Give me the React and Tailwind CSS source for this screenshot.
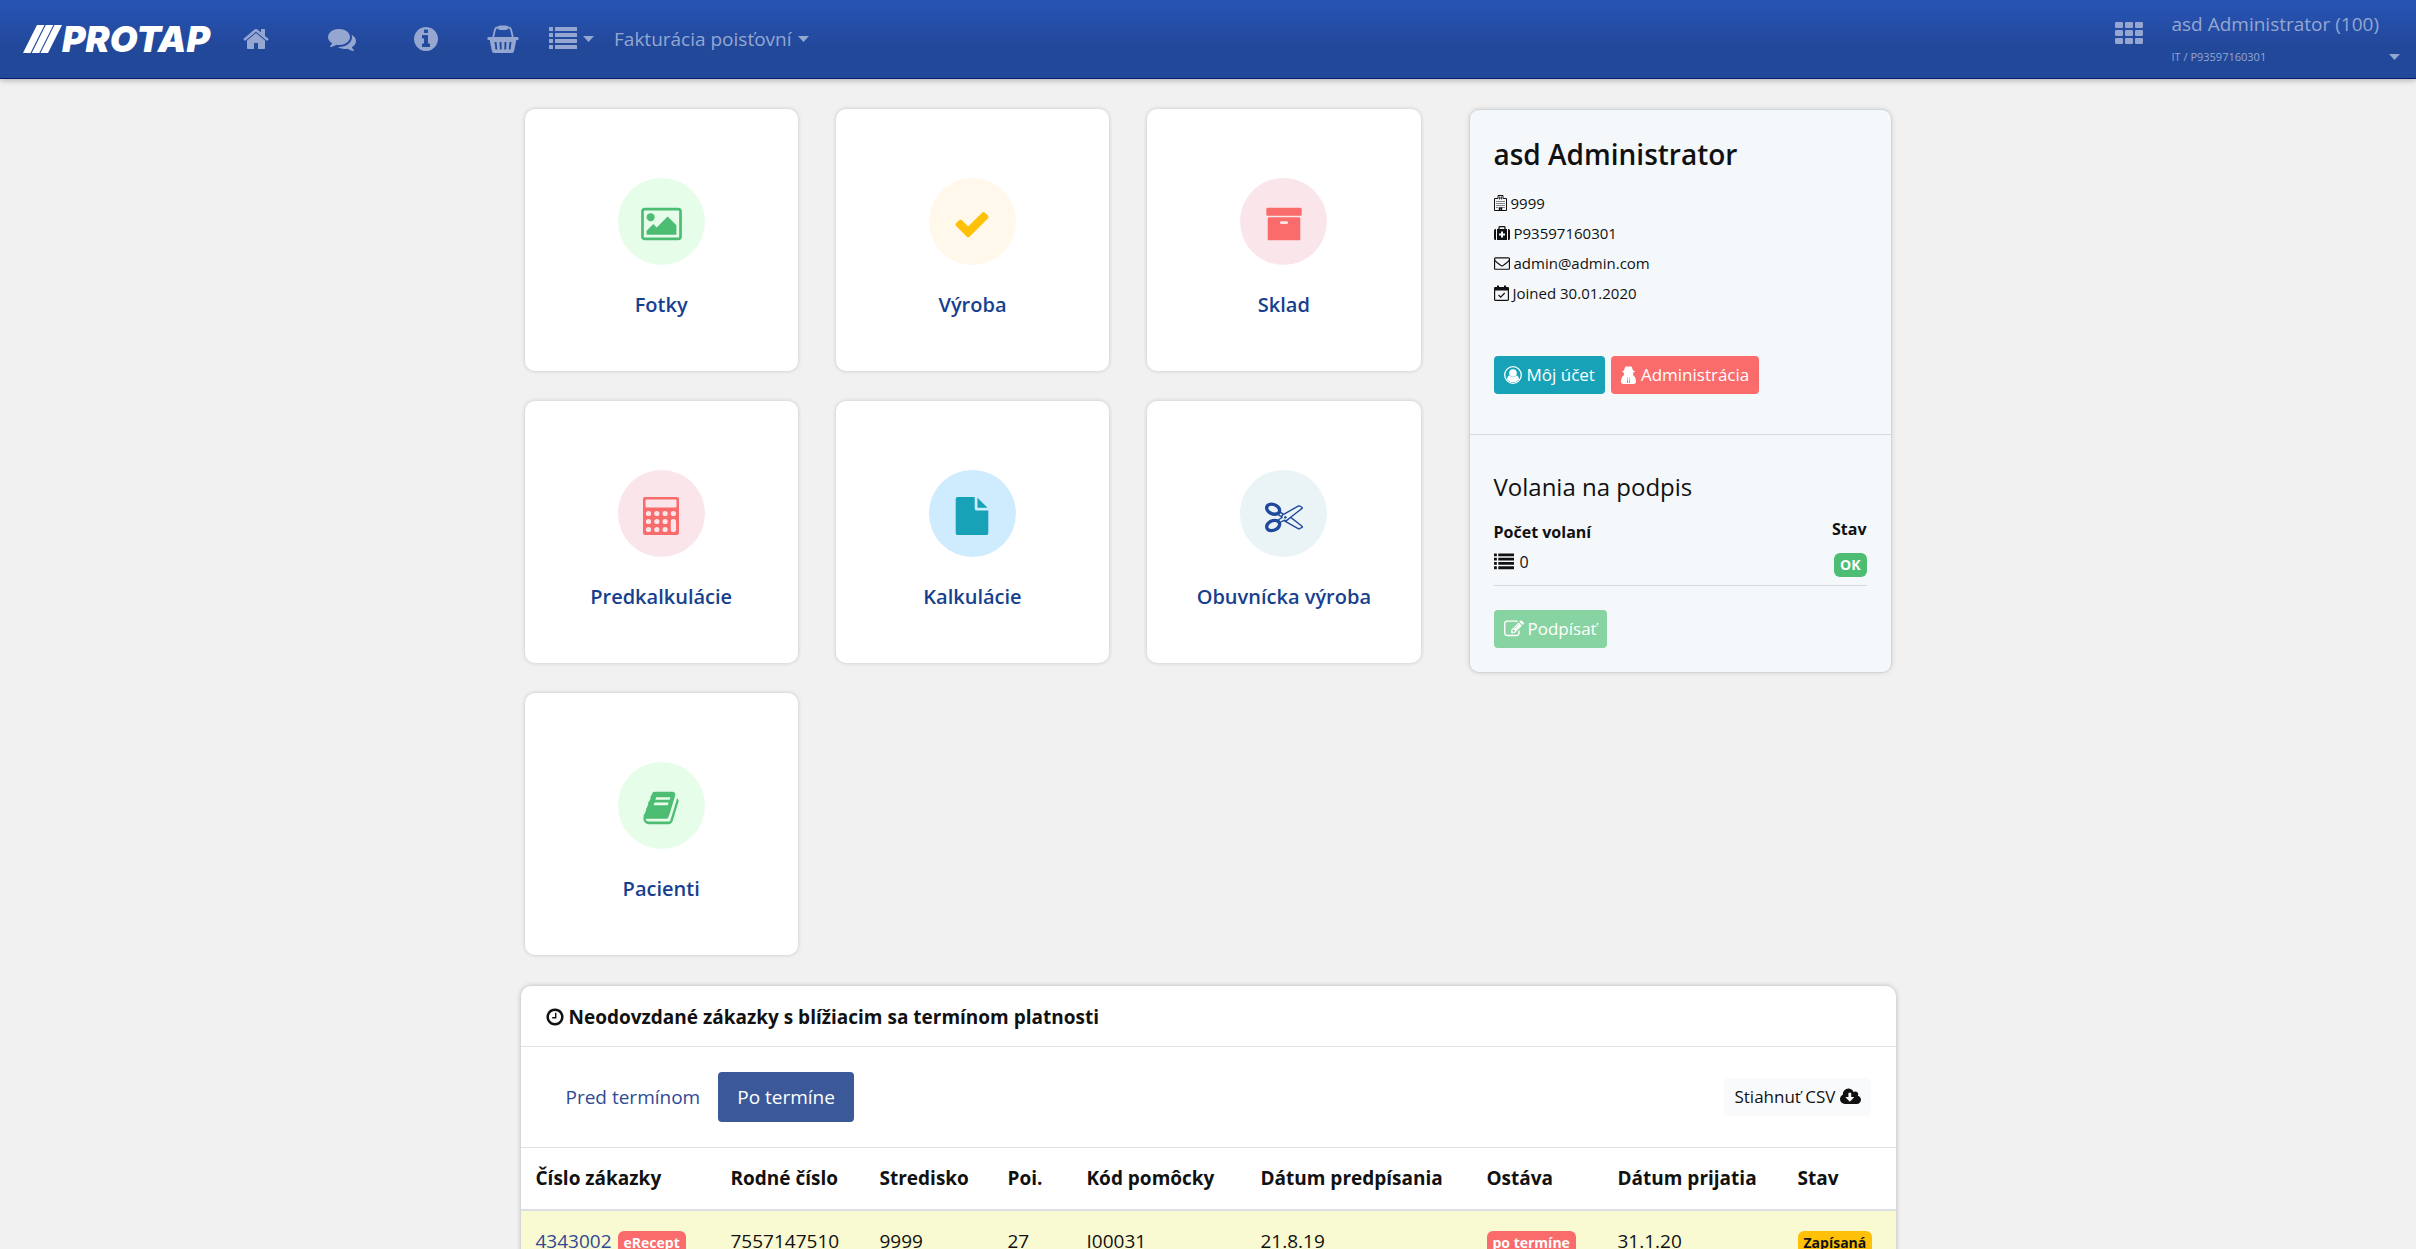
// Font Awesome 4 glyphs, drawn on a 1792 unit grid
const ICONS = {
  home: {
    box: "0 0 1792 1792",
    d: "M1472 992v480q0 26-19 45t-45 19h-384v-384h-256v384h-384q-26 0-45-19t-19-45v-480q0-1 .5-3t.5-3l575-474 575 474q1 2 1 6zm223-69l-62 74q-8 9-21 11h-3q-13 0-21-7l-692-577-692 577q-12 8-24 7-13-2-21-11l-62-74q-8-10-7-23.5t11-21.5l719-599q32-26 76-26t76 26l244 204v-195q0-14 9-23t23-9h192q14 0 23 9t9 23v408l219 182q10 8 11 21.5t-7 23.5z",
  },
  comments: {
    box: "0 0 1792 1792",
    d: "M1408 768q0 139-94 257t-256.5 186.5-353.5 68.5q-86 0-176-16-124 88-278 128-36 9-86 16h-3q-11 0-20.5-8t-11.5-21q-1-3-1-6.5t.5-6.5 2-6l2.5-5 3.5-5.5 4-5 4.5-5 4-4.5q5-6 23-25t26-29.5 22.5-29 25-38.5 20.5-44q-124-72-195-177t-71-224q0-139 94-257t256.5-186.5 353.5-68.5 353.5 68.5 256.5 186.5 94 257zm384 256q0 120-71 224.5t-195 176.5q10 24 20.5 44t25 38.5 22.5 29 26 29.5 23 25q1 1 4 4.5t4.5 5 4 5 3.5 5.5l2.5 5 2 6 .5 6.5-1 6.5q-3 14-13 22t-22 7q-50-7-86-16-154-40-278-128-90 16-176 16-271 0-472-132 58 4 88 4 161 0 309-45t264-129q125-92 192-212t67-254q0-77-23-152 129 71 204 178t75 230z",
  },
  info: {
    box: "0 0 1792 1792",
    d: "M1152 1376v-160q0-14-9-23t-23-9h-96v-512q0-14-9-23t-23-9h-320q-14 0-23 9t-9 23v160q0 14 9 23t23 9h96v320h-96q-14 0-23 9t-9 23v160q0 14 9 23t23 9h448q14 0 23-9t9-23zm-128-896v-160q0-14-9-23t-23-9h-192q-14 0-23 9t-9 23v160q0 14 9 23t23 9h192q14 0 23-9t9-23zm640 416q0 209-103 385.5t-279.5 279.5-385.5 103-385.5-103-279.5-279.5-103-385.5 103-385.5 279.5-279.5 385.5-103 385.5 103 279.5 279.5 103 385.5z",
  },
  list: {
    box: "0 0 1792 1792",
    d: "M32 128h192q32 0 32 32v192q0 32-32 32h-192q-32 0-32-32v-192q0-32 32-32zM416 128h1344q32 0 32 32v192q0 32-32 32h-1344q-32 0-32-32v-192q0-32 32-32zM32 512h192q32 0 32 32v192q0 32-32 32h-192q-32 0-32-32v-192q0-32 32-32zM416 512h1344q32 0 32 32v192q0 32-32 32h-1344q-32 0-32-32v-192q0-32 32-32zM32 896h192q32 0 32 32v192q0 32-32 32h-192q-32 0-32-32v-192q0-32 32-32zM416 896h1344q32 0 32 32v192q0 32-32 32h-1344q-32 0-32-32v-192q0-32 32-32zM32 1280h192q32 0 32 32v192q0 32-32 32h-192q-32 0-32-32v-192q0-32 32-32zM416 1280h1344q32 0 32 32v192q0 32-32 32h-1344q-32 0-32-32v-192q0-32 32-32z",
  },
  picture: {
    box: "-64 0 1920 1792",
    d: "M576 576q0 80-56 136t-136 56-136-56-56-136 56-136 136-56 136 56 56 136zm1024 384v448h-1408v-192l320-320 160 160 512-512zm96-704h-1600q-13 0-22.5 9.5t-9.5 22.5v1216q0 13 9.5 22.5t22.5 9.5h1600q13 0 22.5-9.5t9.5-22.5v-1216q0-13-9.5-22.5t-22.5-9.5zm160 32v1216q0 66-47 113t-113 47h-1600q-66 0-113-47t-47-113v-1216q0-66 47-113t113-47h1600q66 0 113 47t47 113z",
  },
  check: {
    box: "0 0 1792 1792",
    d: "M1671 566q0 40-28 68l-724 724-136 136q-28 28-68 28t-68-28l-136-136-362-362q-28-28-28-68t28-68l136-136q28-28 68-28t68 28l294 295 656-657q28-28 68-28t68 28l136 136q28 28 28 68z",
  },
  archive: {
    box: "0 0 1792 1792",
    d: "M1088 832q0-26-19-45t-45-19h-256q-26 0-45 19t-19 45 19 45 45 19h256q26 0 45-19t19-45zm576-192v960q0 26-19 45t-45 19h-1408q-26 0-45-19t-19-45v-960q0-26 19-45t45-19h1408q26 0 45 19t19 45zm64-448v256q0 26-19 45t-45 19h-1536q-26 0-45-19t-19-45v-256q0-26 19-45t45-19h1536q26 0 45 19t19 45z",
  },
  file: {
    box: "0 0 1792 1792",
    d: "M1152 512v-472q22 14 36 28l408 408q14 14 28 36h-472zm-128 32q0 40 28 68t68 28h544v1056q0 40-28 68t-68 28h-1344q-40 0-68-28t-28-68v-1600q0-40 28-68t68-28h800v544z",
  },
  scissors: {
    box: "0 0 1792 1792",
    d: "M960 896q26 0 45 19t19 45-19 45-45 19-45-19-19-45 19-45 45-19zm300 64l507 398q28 20 25 56-5 35-35 51l-128 64q-13 7-29 7-17 0-31-8l-690-387-110 66q-8 4-12 5 14 49 10 97-7 77-56 147.5t-132 123.5q-132 84-277 84-136 0-222-78-90-84-79-207 7-76 56-147t131-124q132-84 278-84 83 0 151 31 9-13 22-22l122-73-122-73q-13-9-22-22-68 31-151 31-146 0-278-84-82-53-131-124t-56-147q-5-59 15.5-113t63.5-93q85-79 222-79 145 0 277 84 83 52 132 123t56 148q4 48-10 97 4 1 12 5l110 66 690-387q14-8 31-8 16 0 29 7l128 64q30 16 35 51 3 36-25 56zm-681-260q46-42 21-108t-106-117q-92-59-192-59-74 0-113 36-46 42-21 108t106 117q92 59 192 59 74 0 113-36zm-85 745q81-51 106-117t-21-108q-39-36-113-36-100 0-192 59-81 51-106 117t21 108q39 36 113 36 100 0 192-59zm178-613l96 58v-11q0-36 33-56l14-8-79-44-26 26q-3 3-10 11t-12 12q-2 2-4 3.5t-3 2.5zm224 224l96 32 736-576-128-64-768 431v113l-160 96 9 8q2 2 7 6 4 4 11 12t11 12l26 26zm704 416l128-64-520-408-177 138q-2 3-13 7z",
  },
  book: {
    box: "0 0 1792 1792",
    d: "M1703 478q40 57 18 129l-275 906q-19 64-76.5 107.5t-122.5 43.5h-923q-77 0-148.5-53.5t-99.5-131.5q-24-67-2-127 0-4 3-27t4-37q1-8-3-21.5t-3-19.5q2-11 8-21t16.5-23.5 16.5-23.5q23-38 45-91.5t30-91.5q3-10 .5-30t-.5-28q3-11 17-28t17-23q21-36 42-92t25-90q1-9-2.5-32t.5-28q4-13 22-30.5t22-22.5q19-26 42.5-84.5t27.5-96.5q1-8-3-25.5t-2-26.5q2-8 9-18t18-23 17-21q8-12 16.5-30.5t15-35 16-36 19.5-32 26.5-23.5 36-11.5 47.5 5.5l-1 3q38-9 51-9h761q74 0 114 56t18 130l-274 906q-36 119-71.5 153.5t-128.5 34.5h-869q-27 0-38 15-11 16-1 43 24 70 144 70h923q29 0 56-15.5t35-41.5l300-987q7-22 5-57 38 15 59 43zm-1064 2q-4 13 2 22.5t20 9.5h608q13 0 25.5-9.5t16.5-22.5l21-64q4-13-2-22.5t-20-9.5h-608q-13 0-25.5 9.5t-16.5 22.5zm-83 256q-4 13 2 22.5t20 9.5h608q13 0 25.5-9.5t16.5-22.5l21-64q4-13-2-22.5t-20-9.5h-608q-13 0-25.5 9.5t-16.5 22.5z",
  },
  clock: {
    box: "0 0 1792 1792",
    d: "M1024 544v448q0 14-9 23t-23 9h-320q-14 0-23-9t-9-23v-64q0-14 9-23t23-9h224v-352q0-14 9-23t23-9h64q14 0 23 9t9 23zm416 352q0-148-73-273t-198-198-273-73-273 73-198 198-73 273 73 273 198 198 273 73 273-73 198-198 73-273zm224 0q0 209-103 385.5t-279.5 279.5-385.5 103-385.5-103-279.5-279.5-103-385.5 103-385.5 279.5-279.5 385.5-103 385.5 103 279.5 279.5 103 385.5z",
  },
  cloud: {
    box: "-64 0 1920 1792",
    d: "M1216 928q0-14-9-23t-23-9h-224v-352q0-13-9.5-22.5t-22.5-9.5h-192q-13 0-22.5 9.5t-9.5 22.5v352h-224q-13 0-22.5 9.5t-9.5 22.5q0 14 9 23l352 352q9 9 23 9t23-9l351-351q10-12 10-24zm640 224q0 159-112.5 271.5t-271.5 112.5h-1088q-185 0-316.5-131.5t-131.5-316.5q0-130 70-240t188-165q-2-30-2-43 0-212 150-362t362-150q156 0 285.5 87t188.5 231q71-62 166-62 106 0 181 75t75 181q0 76-41 138 130 31 213.5 135.5t83.5 238.5z",
  },
  envelope: {
    box: "0 0 1792 1792",
    d: "M1664 1504v-768q-32 36-69 66-268 206-426 338-51 43-83 67t-86.5 48.5-102.5 24.5h-2q-48 0-102.5-24.5t-86.5-48.5-83-67q-158-132-426-338-37-30-69-66v768q0 13 9.5 22.5t22.5 9.5h1472q13 0 22.5-9.5t9.5-22.5zm0-1051v-24.5l-.5-13-3-12.5-5.5-9-9-7.5-14-2.5h-1472q-13 0-22.5 9.5t-9.5 22.5q0 168 147 284 193 152 401 317 6 5 35 29.5t46 37.5 44.5 31.5 50.5 27.5 43 9h2q20 0 43-9t50.5-27.5 44.5-31.5 46-37.5 35-29.5q208-165 401-317 54-43 100.5-115.5t46.5-131.5zm128-37v1088q0 66-47 113t-113 47h-1472q-66 0-113-47t-47-113v-1088q0-66 47-113t113-47h1472q66 0 113 47t47 113z",
  },
  edit: {
    box: "0 0 1792 1792",
    d: "M888 1184l116-116-152-152-116 116v56h96v96h56zm440-720q-16-16-33 1l-350 350q-17 17-1 33t33-1l350-350q17-17 1-33zm80 594v190q0 119-84.5 203.5t-203.5 84.5h-832q-119 0-203.5-84.5t-84.5-203.5v-832q0-119 84.5-203.5t203.5-84.5h832q63 0 117 25 15 7 18 23 3 17-9 29l-49 49q-14 14-32 8-23-6-45-6h-832q-66 0-113 47t-47 113v832q0 66 47 113t113 47h832q66 0 113-47t47-113v-126q0-13 9-22l64-64q15-15 35-7t20 29zm-96-738l288 288-672 672h-288v-288zm444 132l-92 92-288-288 92-92q28-28 68-28t68 28l152 152q28 28 28 68t-28 68z",
  },
};

function Icon({ name, className }) {
  const icon = ICONS[name];
  return (
    <svg viewBox={icon.box} className={className} fill="currentColor" aria-hidden="true">
      <path d={icon.d} />
    </svg>
  );
}

function Basket({ className }) {
  return (
    <svg viewBox="0 0 32 28" className={className} fill="none" aria-hidden="true">
      <path d="M6 13 8 4.5Q8.500 2.500 10.500 2.500H21.500Q23.500 2.500 24 4.500L26 13" stroke="currentColor" strokeWidth="1.800" />
      <rect x="11" y="0.500" width="10" height="4.500" rx="2" fill="currentColor" />
      <path
        fill="currentColor"
        fillRule="evenodd"
        d="M1.500 12h29q1.200 0 1.200 1.500t-1.200 1.500h-1.200l-2.200 11q-.4 2-2.200 2H7.100q-1.800 0-2.200-2L2.700 15H1.500Q.3 15 .3 13.500T1.500 12zM7.500 17l1 7.500h1.800l-.8-7.500zM12.500 17l.4 7.500h1.800l-.2-7.500zM17.500 17l-.2 7.500h1.800l.4-7.500zM22.500 17l-.8 7.500h1.800l1-7.500z"
      />
    </svg>
  );
}

function GridIcon({ className }) {
  return (
    <svg viewBox="0 0 28 22" className={className} fill="currentColor" aria-hidden="true">
      {[0, 8, 16].map((y) =>
        [0, 10, 20].map((x) => <rect key={`${x}-${y}`} x={x} y={y} width="8" height="6" rx="1.2" />)
      )}
    </svg>
  );
}

function Calculator({ className }) {
  return (
    <svg viewBox="0 0 36 38" className={className} fill="currentColor" aria-hidden="true">
      <path
        fillRule="evenodd"
        d="M2 0h32q2 0 2 2v34q0 2-2 2H2q-2 0-2-2V2Q0 0 2 0zM3.500 2.500q-1 0-1 1v6q0 1 1 1h29q1 0 1-1v-6q0-1-1-1z"
      />
      <g className="text-[#fae6ea]">
        {[5.5, 13.8, 22.1].map((x) =>
          [16.5, 24.5, 32.5].map((y) => <circle key={`${x}-${y}`} cx={x} cy={y} r="2.6" />)
        )}
        <circle cx="30.4" cy="16.5" r="2.6" />
        <rect x="27.8" y="21.9" width="5.2" height="13.2" rx="2.6" />
      </g>
    </svg>
  );
}

function Hospital({ className }) {
  return (
    <svg viewBox="0 0 13 16" className={className} fill="none" stroke="currentColor" aria-hidden="true">
      <path d="M.5 15.500V3.500H4V.5H9V3.500H12.500V15.500Z" />
      <path d="M5.500 1.500V4.500M7.500 1.500V4.500M5.500 3H7.500" strokeWidth=".8" />
      <path d="M2.500 6.500H11M2.500 8.500H11M2.500 10.500H11M2.500 12.500H4.500M8.500 12.500H11" strokeDasharray="1 1" />
      <path d="M5.500 15.500V13H7.500V15.500" strokeWidth="1.500" />
    </svg>
  );
}

function Medkit({ className }) {
  return (
    <svg viewBox="0 0 16 14" className={className} fill="currentColor" aria-hidden="true">
      <path d="M5 3V1.500Q5 .7 5.800.7H10.200Q11 .7 11 1.500V3" fill="none" stroke="currentColor" strokeWidth="1.300" />
      <path d="M2 3v11h-.5Q0 14 0 12.500v-8Q0 3 1.500 3zM14 3v11h.5q1.500 0 1.500-1.500v-8Q16 3 14.500 3z" />
      <path fillRule="evenodd" d="M3 3h10v11H3zM7 5.500v2H5v2h2v2h2v-2h2v-2H9v-2z" />
    </svg>
  );
}

function CalendarCheck({ className }) {
  return (
    <svg viewBox="0 0 15 16" className={className} fill="none" stroke="currentColor" aria-hidden="true">
      <rect x=".6" y="2.600" width="13.800" height="12.800" rx=".8" strokeWidth="1.200" />
      <path d="M1 2.500H14V5H1Z" fill="currentColor" />
      <path d="M4 .5V4M11 .5V4" strokeWidth="2" />
      <path d="M4.500 10l2.200 2.200L10.700 8" strokeWidth="1.200" />
    </svg>
  );
}

function UserCircle({ className }) {
  return (
    <svg viewBox="0 0 18 18" className={className} fill="currentColor" aria-hidden="true">
      <circle cx="9" cy="9" r="8.300" fill="none" stroke="currentColor" strokeWidth="1.300" />
      <circle cx="9" cy="7" r="3.800" />
      <path d="M3 13.500Q3.300 9.800 5.500 9.500Q9 12.500 12.500 9.500Q14.700 9.800 15 13.500Q12.800 16.200 9 16.200T3 13.500z" />
    </svg>
  );
}

function UserSecret({ className }) {
  return (
    <svg viewBox="0 0 15 18" className={className} fill="currentColor" aria-hidden="true">
      <path
        fillRule="evenodd"
        d="M3 4.500 4 1.500Q4.800-.4 7.500.8Q10.200-.4 11 1.500L12 4.500Q14 5 14 5.600Q13.500 6.300 12.200 6.600Q12.400 8 11.800 9Q14.800 10.500 15 15.500Q15 18 12.500 18H2.500Q0 18 0 15.500Q.2 10.500 3.200 9Q2.600 8 2.800 6.600Q1.500 6.300 1 5.600Q1 5 3 4.500zM5.800 11l.8 1.500-.8 4.500h1.200v-5zM9.200 11l-.8 1.500.8 4.500H8v-5z"
      />
    </svg>
  );
}

function Caret() {
  return (
    <svg viewBox="0 0 11 6" className="h-1.5 w-[11px] shrink-0" fill="currentColor" aria-hidden="true">
      <path d="M0 0H11L5.500 6Z" />
    </svg>
  );
}

const modules = [
  { label: "Fotky", circle: "bg-[#e6fde9] text-[#4dbd74]", icon: <Icon name="picture" className="h-[38px] w-[41px]" /> },
  { label: "Výroba", circle: "bg-[#fff8eb] text-[#ffc107]", icon: <Icon name="check" className="size-[38px]" /> },
  { label: "Sklad", circle: "bg-[#fae6ea] text-[#f96c6b]", icon: <Icon name="archive" className="size-[38px]" /> },
  { label: "Predkalkulácie", circle: "bg-[#fae6ea] text-[#f96c6b]", icon: <Calculator className="h-[38px] w-9" /> },
  { label: "Kalkulácie", circle: "bg-[#cfecff] text-[#17a2b8]", icon: <Icon name="file" className="size-[38px]" /> },
  { label: "Obuvnícka výroba", circle: "bg-[#eaf4f7] text-[#20489c]", icon: <Icon name="scissors" className="size-[38px]" /> },
  { label: "Pacienti", circle: "bg-[#e6fde9] text-[#4dbd74]", icon: <Icon name="book" className="size-[38px]" /> },
];

const columns = [
  { label: "Číslo zákazky", width: "w-[195px]" },
  { label: "Rodné číslo", width: "w-[149px]" },
  { label: "Stredisko", width: "w-[128px]" },
  { label: "Poi.", width: "w-[79px]" },
  { label: "Kód pomôcky", width: "w-[174px]" },
  { label: "Dátum predpísania", width: "w-[226px]" },
  { label: "Ostáva", width: "w-[131px]" },
  { label: "Dátum prijatia", width: "w-[180px]" },
  { label: "Stav", width: "w-[113px]" },
];

const orders = [
  {
    id: "4343002",
    tag: "eRecept",
    birthNo: "7557147510",
    center: "9999",
    insurer: "27",
    code: "I00031",
    prescribed: "21.8.19",
    remaining: "po termíne",
    received: "31.1.20",
    status: "Zapísaná",
  },
];

function Badge({ className, children }) {
  return (
    <span className={`inline-block rounded-md px-1.5 text-sm leading-6 font-bold ${className}`}>
      {children}
    </span>
  );
}

function Navbar() {
  return (
    <header className="flex h-[79px] items-center border-b border-[#0a1a6e] bg-linear-to-b from-[#2754b5] to-[#22489a] to-60% pr-4 pl-[23px] text-[#95a7d1] shadow-[0_1px_6px_rgba(0,0,0,0.3)]">
      <a href="#" className="flex items-center text-white">
        <svg viewBox="0 0 39 28" className="h-7 w-[39px]" fill="currentColor" aria-hidden="true">
          <path d="M14 0H21.500L7.500 28H0ZM22.800 0H30.300L16.300 28H8.800ZM31.500 0H39L25 28H17.500Z" />
        </svg>
        <span className="font-[Inter,sans-serif] text-[36px] leading-8 font-black italic">PROTAP</span>
      </a>
      <nav className="flex items-center">
        <a href="#" aria-label="Domov" className="ml-8"><Icon name="home" className="size-7" /></a>
        <a href="#" aria-label="Správy" className="ml-[58px]"><Icon name="comments" className="size-7" /></a>
        <a href="#" aria-label="Informácie" className="ml-14"><Icon name="info" className="size-7" /></a>
        <a href="#" aria-label="Košík" className="ml-[47px]"><Basket className="h-7 w-8" /></a>
        <button aria-label="Zoznamy" className="ml-[30px] flex items-center gap-1.5">
          <Icon name="list" className="size-7" />
          <Caret />
        </button>
        <button className="ml-5 flex items-center gap-1.5 text-[19px]">
          Fakturácia poisťovní
          <Caret />
        </button>
      </nav>
      <div className="ml-auto flex items-center">
        <button aria-label="Aplikácie" className="mr-[29px] mb-3">
          <GridIcon className="h-[22px] w-7" />
        </button>
        <button className="flex items-end text-left">
          <span className="flex flex-col">
            <span className="text-[19px] leading-9">asd Administrator (100)</span>
            <span className="text-[11px] leading-[30px]">IT / P93597160301</span>
          </span>
          <span className="mb-3 ml-2.5"><Caret /></span>
        </button>
      </div>
    </header>
  );
}

function ModuleCard({ module }) {
  return (
    <a
      href="#"
      className="flex h-[262px] flex-col items-center rounded-[10px] bg-white pt-[69px] shadow-[0_0_4px_rgba(0,0,0,0.18)]"
    >
      <span className={`flex size-[87px] items-center justify-center rounded-full pt-1 ${module.circle}`}>
        {module.icon}
      </span>
      <span className="mt-6 text-xl leading-8 font-semibold text-[#173f8f]">{module.label}</span>
    </a>
  );
}

function ProfilePanel() {
  return (
    <aside className="w-[423px] shrink-0 self-start rounded-[10px] border border-[#d2d5d8] bg-[#f4f8fb] text-[#111] shadow-[0_0_5px_rgba(0,0,0,0.12)]">
      <section className="border-b border-[#d6dadd] px-6 pt-6 pb-10">
        <h2 className="text-[28px] leading-10 font-semibold">asd Administrator</h2>
        <ul className="mt-3.5 text-[15px] leading-[30px]">
          <li className="flex items-center gap-1"><Hospital className="h-4 w-[13px]" />9999</li>
          <li className="flex items-center gap-1"><Medkit className="h-3.5 w-4" />P93597160301</li>
          <li className="flex items-center gap-1"><Icon name="envelope" className="size-4" />admin@admin.com</li>
          <li className="flex items-center gap-1"><CalendarCheck className="h-4 w-[15px]" />Joined 30.01.2020</li>
        </ul>
        <div className="mt-12 flex gap-1.5">
          <button className="flex h-[38px] items-center gap-[5px] rounded bg-[#17a2b8] px-2.5 text-[17px] text-white">
            <UserCircle className="size-[18px]" />
            Môj účet
          </button>
          <button className="flex h-[38px] items-center gap-[5px] rounded bg-[#f96c6b] px-2.5 text-[17px] text-white">
            <UserSecret className="h-[18px] w-[15px]" />
            Administrácia
          </button>
        </div>
      </section>
      <section className="px-6 pt-9 pb-6">
        <h3 className="text-2xl leading-8">Volania na podpis</h3>
        <div className="mt-2.5 flex items-start justify-between border-b border-[#d6dadd] pb-2">
          <div>
            <div className="mt-1 text-base leading-[30px] font-bold">Počet volaní</div>
            <div className="flex items-center gap-1.5 text-base leading-[30px]">
              <Icon name="list" className="size-5" />0
            </div>
          </div>
          <div className="flex flex-col items-end gap-2">
            <span className="text-base leading-8 font-bold">Stav</span>
            <Badge className="bg-[#4dbd74] text-white">OK</Badge>
          </div>
        </div>
        <button
          disabled
          className="mt-6 flex h-[38px] items-center gap-1 rounded bg-[#88d3a2] px-2.5 text-[17px] text-white"
        >
          <Icon name="edit" className="size-5" />
          Podpísať
        </button>
      </section>
    </aside>
  );
}

function OrdersCard() {
  return (
    <section className="mt-[31px] overflow-hidden rounded-t-[10px] bg-white text-[#111] shadow-[0_0_5px_rgba(0,0,0,0.25)]">
      <h2 className="flex h-[61px] items-center gap-1 border-b border-[#dfe1e3] px-6 pt-0.5 text-[19px] font-bold">
        <Icon name="clock" className="size-5" />
        Neodovzdané zákazky s blížiacim sa termínom platnosti
      </h2>
      <div className="flex h-[101px] items-center justify-between border-b border-[#dfe1e3] px-[25px]">
        <div className="flex text-[19px]">
          <button className="h-[50px] rounded pr-[18px] pl-5 text-[#2f4a94]">Pred termínom</button>
          <button className="h-[50px] rounded bg-[#3b5998] px-[19px] text-white">Po termíne</button>
        </div>
        <button className="flex h-[38px] items-center gap-1 rounded bg-[#f9fafb] px-2.5 text-[17px]">
          Stiahnuť CSV
          <Icon name="cloud" className="h-5 w-[21px]" />
        </button>
      </div>
      <table className="w-full table-fixed border-collapse text-left text-[19px]">
        <thead>
          <tr className="h-[62px] border-b-2 border-[#dce0e6]">
            {columns.map((col) => (
              <th key={col.label} className={`px-[15px] font-bold whitespace-nowrap ${col.width}`}>
                {col.label}
              </th>
            ))}
          </tr>
        </thead>
        <tbody>
          {orders.map((order) => (
            <tr key={order.id} className="h-[62px] bg-[#f9f9d2] whitespace-nowrap">
              <td className="px-[15px]">
                <a href="#" className="mr-1.5 text-[#2f4a94]">{order.id}</a>
                <Badge className="bg-[#f96c6b] text-white">{order.tag}</Badge>
              </td>
              <td className="px-[15px]">{order.birthNo}</td>
              <td className="px-[15px]">{order.center}</td>
              <td className="px-[15px]">{order.insurer}</td>
              <td className="px-[15px]">{order.code}</td>
              <td className="px-[15px]">{order.prescribed}</td>
              <td className="px-[15px]"><Badge className="bg-[#f96c6b] text-white">{order.remaining}</Badge></td>
              <td className="px-[15px]">{order.received}</td>
              <td className="px-[15px]"><Badge className="bg-[#ffc107] text-[#111]">{order.status}</Badge></td>
            </tr>
          ))}
        </tbody>
      </table>
    </section>
  );
}

export default function App() {
  return (
    <div className="min-h-screen bg-[#f1f1f1] font-['Open_Sans','Noto_Sans',sans-serif]">
      <Navbar />
      <main className="mx-auto max-w-[1375px] pt-[30px]">
        <div className="flex gap-12 px-1">
          <div className="grid flex-1 grid-cols-3 gap-x-[38px] gap-y-[30px]">
            {modules.map((module) => (
              <ModuleCard key={module.label} module={module} />
            ))}
          </div>
          <ProfilePanel />
        </div>
        <OrdersCard />
      </main>
    </div>
  );
}
